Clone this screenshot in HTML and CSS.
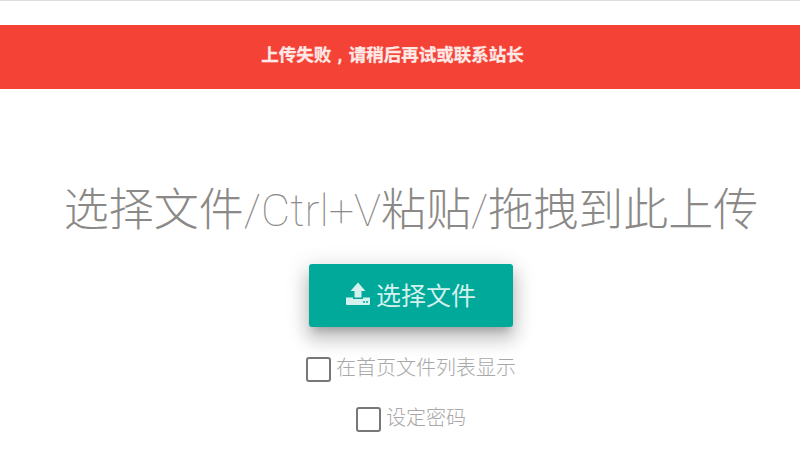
FILE: index.html
```html
<!DOCTYPE html>
<html lang="zh-CN">
<head>
    <meta charset="UTF-8">
    <meta name="viewport" content="width=device-width, initial-scale=1.0">
    <title>上传文件</title>
    <link rel="stylesheet" href="styles.css">
</head>
<body>
    <!-- 错误提示 -->
    <div class="alert">上传失败<span class="comma">,</span>请稍后再试或联系站长</div>

    <!-- 上传区域 -->
    <section class="upload">
        <h1>选择文件<span class="thin">/Ctrl+V</span>粘贴<span class="thin">/</span>拖拽到此上传</h1>
        <button class="upload-btn" type="button">
            <svg class="upload-icon" viewBox="0 0 24 24" width="24" height="24" aria-hidden="true">
                <path d="M12 0.5 L19.5 9 H15.5 V15.5 H8.5 V9 H4.5 Z" fill="currentColor"/>
                <path d="M0 15.5 H7 V17 H17 V15.5 H24 V22 A1 1 0 0 1 23 23 H1 A1 1 0 0 1 0 22 Z" fill="currentColor"/>
                <circle cx="18" cy="20" r="1" fill="#00a99a"/>
                <circle cx="21" cy="20" r="1" fill="#00a99a"/>
            </svg>
            <span>选择文件</span>
        </button>
        <label class="option"><span class="box"></span><span class="option-text">在首页文件列表显示</span></label>
        <label class="option"><span class="box"></span><span class="option-text">设定密码</span></label>
    </section>
</body>
</html>
```

FILE: styles.css
```css
body, html {
    margin: 0;
    padding: 0;
    height: 100%;
    overflow: hidden;
    background: #fff;
    font-family: Roboto, "Noto Sans CJK SC", sans-serif;
}

body {
    border-top: 1px solid #ddd;
    box-sizing: border-box;
    padding-top: 24px;
}

/* 错误提示 */
.alert {
    height: 64px;
    line-height: 60px;
    padding-right: 15px;
    background-color: #f44336;
    color: #ffe9e7;
    font-size: 17.5px;
    font-weight: bold;
    text-align: center;
    -webkit-text-stroke: 0.3px #ffe9e7;
}

/* 逗号居中 */
.comma {
    display: inline-block;
    width: 17.5px;
    text-align: center;
}

/* 上传区域 */
.upload {
    display: flex;
    flex-direction: column;
    align-items: center;
    padding-left: 22px;
}

h1 {
    margin: 89px 0 0 0;
    height: 86px;
    line-height: 66px;
    font-size: 45px;
    font-weight: 300;
    color: #8b8987;
    white-space: nowrap;
}

.thin {
    font-weight: 100;
}

.upload-btn {
    display: flex;
    align-items: center;
    justify-content: center;
    gap: 6px;
    box-sizing: border-box;
    width: 204px;
    height: 63px;
    padding: 0 0 4px 0;
    border: none;
    border-radius: 3px;
    background-color: #00a99a;
    color: #d4f1ed;
    font-family: inherit;
    font-size: 25px;
    font-weight: 400;
    box-shadow: 0 12px 17px 2px rgba(0, 0, 0, 0.14), 0 5px 22px 4px rgba(0, 0, 0, 0.12), 0 7px 8px -4px rgba(0, 0, 0, 0.2);
}

.upload-icon {
    flex: none;
}

.option {
    display: flex;
    align-items: center;
    gap: 5px;
    height: 25px;
    font-size: 20px;
    font-weight: 300;
    color: #a8a8a8;
    margin-top: 25px;
}

.upload-btn + .option {
    margin-top: 30px;
}

.option-text {
    margin-bottom: 7px;
}

.box {
    box-sizing: border-box;
    width: 25px;
    height: 25px;
    border: 2px solid #777;
    border-radius: 3px;
}
```
